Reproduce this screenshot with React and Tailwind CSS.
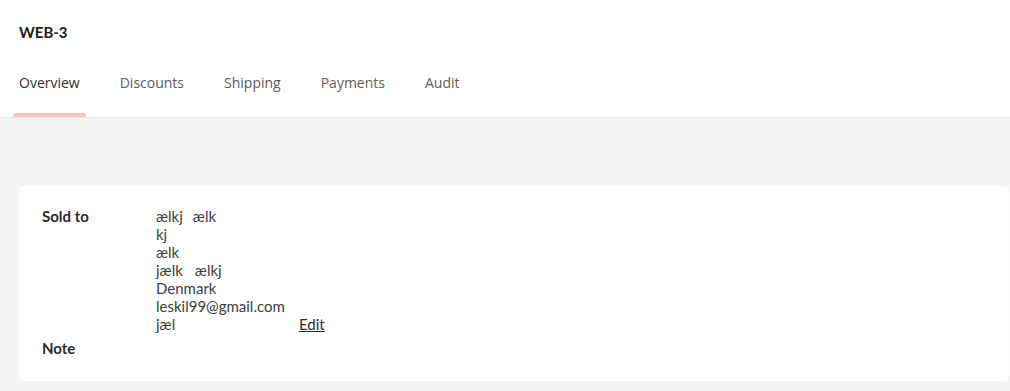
import React from "react";

const tabs = ["Overview", "Discounts", "Shipping", "Payments", "Audit"];

export default function App() {
  return (
    <div className="min-h-[391px] bg-[#f5f3f3]" style={{ fontFamily: "Lato, 'Open Sans', sans-serif" }}>
      <div className="bg-white border-b border-[#e8e6e6] pl-[13px]">
        <div className="h-[64px] flex items-center pl-[6px]">
          <h1 className="text-[15px] font-bold text-[#1a1a1a] leading-none">WEB-3</h1>
        </div>
        <nav className="flex gap-[28px] h-[53px]" style={{ fontFamily: "'Open Sans', sans-serif" }}>
          {tabs.map((t, i) => (
            <div key={t} className="flex flex-col">
              <span className={`px-[6px] pt-[9px] text-[14px] leading-[20px] ${i === 0 ? "text-[#333333]" : "text-[#5c5c5c]"}`}>{t}</span>
              <div className={`mt-auto h-[4px] rounded-t-[3px] ${i === 0 ? "bg-[#f5c3c0]" : "bg-transparent"}`} />
            </div>
          ))}
        </nav>
      </div>
      <div className="pt-[68px] pl-[19px] pr-[1px]">
        <div className="bg-white rounded-[4px] pt-[21px] pb-[24px] pl-[23px] text-[15px] leading-[18px]">
          <div className="flex">
            <div className="w-[114px] font-bold text-[#2b2b2b]">Sold to</div>
            <div className="text-[#3d3d3d]">
              <div><span className="mr-[10px]">ælkj</span><span>ælk</span></div>
              <div>kj</div>
              <div>ælk</div>
              <div><span className="mr-[12px]">jælk</span><span>ælkj</span></div>
              <div>Denmark</div>
              <div>leskil99@gmail.com</div>
              <div className="flex">
                <span className="w-[143px]">jæl</span>
                <a href="#" className="underline text-[#2b2b2b]">Edit</a>
              </div>
            </div>
          </div>
          <div className="mt-[6px] font-bold text-[#2b2b2b]">Note</div>
        </div>
      </div>
    </div>
  );
}
